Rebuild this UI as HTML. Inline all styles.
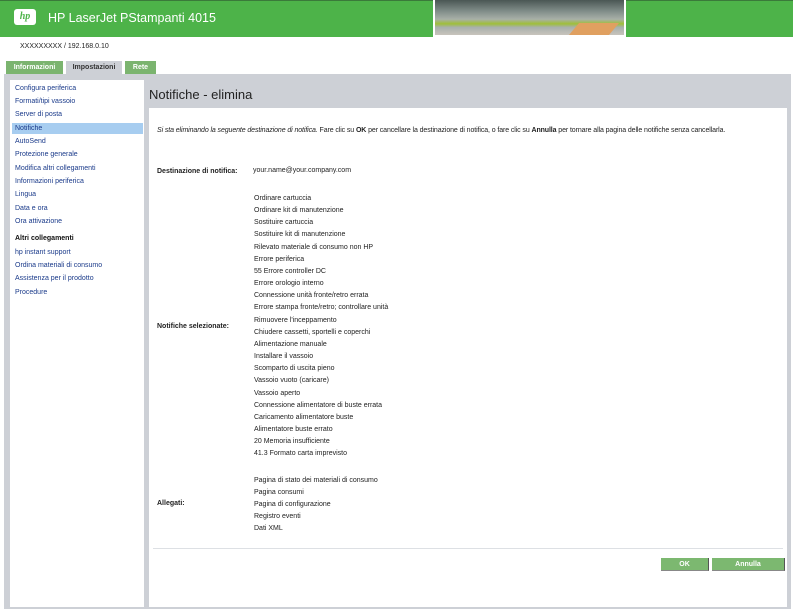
<!DOCTYPE html>
<html><head><meta charset="utf-8"><style>
*{margin:0;padding:0;box-sizing:border-box}
body{width:793px;height:614px;background:#fff;font-family:"Liberation Sans",sans-serif;position:relative;overflow:hidden;color:#222}
.a{position:absolute}
.hdr{left:0;top:0;width:793px;height:37px;background:#4db349;border-top:1px solid #3a7a3a}
.logo{left:14px;top:9px;width:22px;height:16px;background:#fff;border-radius:3px;color:#4db349;font:italic bold 10px "Liberation Serif",serif;text-align:center;line-height:16px}
.title{left:48px;top:11px;color:#fff;font-size:12.5px}
.img{left:433px;top:0;width:193px;height:37px;background:linear-gradient(180deg,#4a5654 0%,#7d8a86 30%,#a8b0a8 55%,#9fbf3a 68%,#a8b0ac 78%,#c8c4bc 100%);border:2px solid #fff;border-top:0;overflow:hidden}
.img:after{content:"";position:absolute;right:10px;bottom:0;width:40px;height:12px;background:#e0a060;transform:skewX(-40deg)}
.ip{left:20px;top:43px;font-size:7px;color:#222}
.tab{top:61px;height:13px;font-size:7px;font-weight:bold;line-height:13px;text-align:center}
.frame{left:4px;top:74px;width:787px;height:535px;background:#cdd0d6}
.side{left:10px;top:80px;width:134px;height:527px;background:#fff}
.side div{position:absolute;left:5px;font-size:7px;color:#1a3a8a}
.main{left:149px;top:108px;width:638px;height:499px;background:#fff}
.h{left:149px;top:87px;font-size:13px;color:#222}
.t{position:absolute;font-size:7px;color:#222;white-space:nowrap}
.b{font-weight:bold}
.btn{top:558px;height:13px;background:#7cb870;color:#fff;font-size:7px;font-weight:bold;text-align:center;line-height:13px;border-right:1px solid #555;border-bottom:1px solid #888}
</style></head><body>
<div class="a hdr"></div>
<div class="a logo">hp</div>
<div class="a title">HP LaserJet PStampanti 4015</div>
<div class="a img"></div>
<div class="a ip">XXXXXXXXX / 192.168.0.10</div>
<div class="a tab" style="left:6px;width:57px;background:#7bb46f;color:#fff">Informazioni</div>
<div class="a tab" style="left:66px;width:56px;background:#cdd0d6;color:#333">Impostazioni</div>
<div class="a tab" style="left:125px;width:31px;background:#7bb46f;color:#fff">Rete</div>
<div class="a frame"></div>
<div class="a side">
<div style="top:5px">Configura periferica</div>
<div style="top:18px">Formati/tipi vassoio</div>
<div style="top:31px">Server di posta</div>
<div style="top:43px;left:2px;width:131px;height:11px;background:#a7cdf0"></div>
<div style="top:45px">Notifiche</div>
<div style="top:58px">AutoSend</div>
<div style="top:71px">Protezione generale</div>
<div style="top:85px">Modifica altri collegamenti</div>
<div style="top:98px">Informazioni periferica</div>
<div style="top:111px">Lingua</div>
<div style="top:125px">Data e ora</div>
<div style="top:138px">Ora attivazione</div>
<div style="top:155px;color:#111;font-weight:bold">Altri collegamenti</div>
<div style="top:169px">hp instant support</div>
<div style="top:182px">Ordina materiali di consumo</div>
<div style="top:195px">Assistenza per il prodotto</div>
<div style="top:209px">Procedure</div>
</div>
<div class="a h">Notifiche - elimina</div>
<div class="a main"></div>
<div class="t" style="left:157px;top:127px;letter-spacing:-0.1px"><i>Si sta eliminando la seguente destinazione di notifica.</i> Fare clic su <b>OK</b> per cancellare la destinazione di notifica, o fare clic su <b>Annulla</b> per tornare alla pagina delle notifiche senza cancellarla.</div>
<div class="t b" style="left:157px;top:168px">Destinazione di notifica:</div>
<div class="t" style="left:253px;top:167px">your.name@your.company.com</div>
<div class="t b" style="left:157px;top:323px">Notifiche selezionate:</div>
<div class="t b" style="left:157px;top:500px">Allegati:</div>
<div class="t" style="left:254px;top:193px;line-height:12.15px">Ordinare cartuccia<br>Ordinare kit di manutenzione<br>Sostituire cartuccia<br>Sostituire kit di manutenzione<br>Rilevato materiale di consumo non HP<br>Errore periferica<br>55 Errore controller DC<br>Errore orologio interno<br>Connessione unità fronte/retro errata<br>Errore stampa fronte/retro; controllare unità<br>Rimuovere l'inceppamento<br>Chiudere cassetti, sportelli e coperchi<br>Alimentazione manuale<br>Installare il vassoio<br>Scomparto di uscita pieno<br>Vassoio vuoto (caricare)<br>Vassoio aperto<br>Connessione alimentatore di buste errata<br>Caricamento alimentatore buste<br>Alimentatore buste errato<br>20 Memoria insufficiente<br>41.3 Formato carta imprevisto</div>
<div class="t" style="left:254px;top:475px;line-height:12.1px">Pagina di stato dei materiali di consumo<br>Pagina consumi<br>Pagina di configurazione<br>Registro eventi<br>Dati XML</div>
<div class="a" style="left:153px;top:548px;width:630px;height:1px;background:#dde0e4"></div>
<div class="a btn" style="left:661px;width:48px">OK</div>
<div class="a btn" style="left:712px;width:73px">Annulla</div>
</body></html>
